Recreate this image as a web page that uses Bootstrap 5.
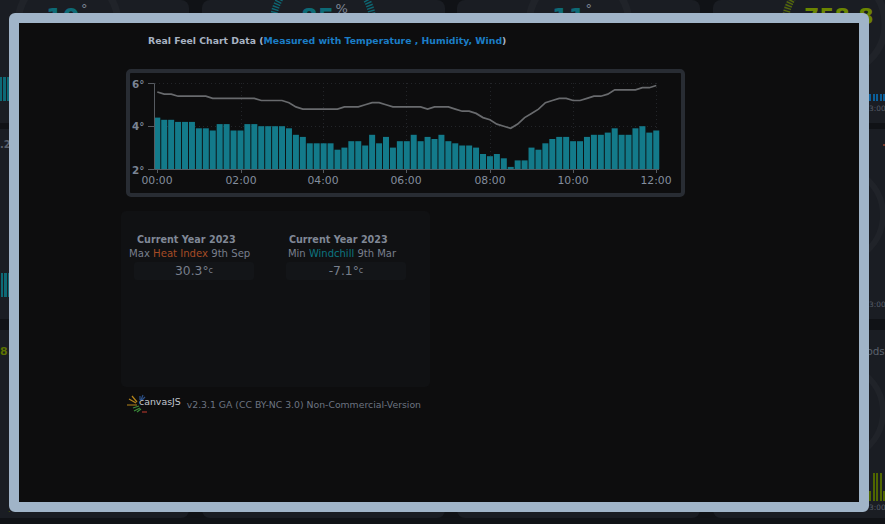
<!DOCTYPE html>
<html lang="en">
<head>
<meta charset="utf-8">
<title>Real Feel Chart Data</title>
<link href="https://cdn.jsdelivr.net/npm/bootstrap@5.3.0/dist/css/bootstrap.min.css" rel="stylesheet">
<style>
html,body{height:524px;overflow:hidden}
body{background:#101216;font-family:"DejaVu Sans",sans-serif;color:#8a94a5}
.dash{display:grid;grid-template-columns:repeat(4,243px);gap:0 12.7px;grid-template-rows:123px 190px 188px;row-gap:6px;margin-left:-54px;width:1010px}
.dash>.tile:nth-child(n+9){margin-top:5px}
.tile{background:#1a1d23;border-radius:8px;overflow:hidden;border:0;height:100%}
.gauge{display:block;flex:none}
.gauge text{font-family:"DejaVu Sans",sans-serif;font-weight:700;font-size:24px}
.gauge .t{fill:#0d6a76}.gauge .o{fill:#6b8500;font-size:22px}
.gauge .u{font-size:13px;font-weight:400;fill:#7d8694}
.micro{font-size:7.4px;color:#565c67;line-height:1}
.strip{display:flex;align-items:flex-end;gap:1.2px}
.strip i{display:block;width:2.3px;flex:none}
.st-t i{background:#0d6a76}.st-b i{background:#0b5f9a}.st-o i{background:#4f6600}
.tit{font-size:10px;font-weight:700;color:#5b616c;line-height:1}
.tit.ol{color:#5c7200;font-size:11px}
.micro.ol{color:#5c7200}
.ttl2{font-size:10.4px;color:#5b616c;line-height:1;white-space:nowrap;margin:16px 0 0 -9px}
.redmark{display:block;width:3px;height:2px;background:#7a3a2c;margin:15px 0 9px 14px}
.frame{position:fixed;left:9px;top:13px;width:860px;height:499px;border:10px solid #a0b4c8;border-radius:6px;background:#0d0d0e;overflow:hidden}
.head{font-size:9.32px;font-weight:600;color:#a8b3c3;margin:11px 0 0 129px;line-height:14px;height:14px}
.head span{color:#1b7dc6}
.plot{margin:21px 0 0 107px;width:559px;height:128px;border:4px solid #282c33;border-radius:5px;background:#0d0d0e}
.plot svg{display:block}
.plot text{font-family:"DejaVu Sans",sans-serif;fill:#848e9e;font-size:10.8px}
.plot .yl{font-size:10.4px;font-weight:700;fill:#7a8494}
.panel{margin:14px 0 0 102px;width:309px;height:176px;background:#101113;border-radius:5px;padding-top:22px}
.stat{color:#787f8c;font-size:10.1px;line-height:15px;width:154px}
.stat .cap{font-weight:600;font-size:9.65px;line-height:13px;color:#808896;padding-left:8px}
.stat .vbox{background:#131518;border-radius:3px;width:120px;height:18px;font-size:12.3px;line-height:18px;text-align:center;margin:1px 0 0 5px}
.stat .vbox sup{font-size:8px;top:-.3em}
.stat .sub2{padding-left:7px;font-size:10px}
.hi{color:#a54b25}.wc{color:#0d7580}
.stat1{margin-left:8px;width:157px}
.foot{margin:6px 0 0 108px;height:20px;font-size:9.3px;color:#6c7481}
.foot .cj{font-size:9.4px;color:#c2c8d0;margin:0 6px 0 -10px;position:relative;top:-1px}
.foot .ver{margin-top:3px}
.foot svg{margin-top:1px}
</style>
</head>
<body>
<div class="dash">
  <!-- row 1 -->
  <div class="tile card d-flex flex-column align-items-end">
    <svg class="gauge align-self-center" width="120" height="70" viewBox="-60 -24 120 70"><circle r="50" fill="none" stroke="#202329" stroke-width="7"/><text class="t" x="-22" y="2">10</text><text class="u" x="13" y="-11">°</text></svg>
    <div class="strip st-t me-auto" style="margin:7px 0 0 54px;height:24px"><i style="height:24px"></i><i style="height:24px"></i><i style="height:24px"></i></div>
  </div>
  <div class="tile card d-flex flex-column">
    <svg class="gauge align-self-center" width="120" height="70" viewBox="-60 -24 120 70"><circle r="50" fill="none" stroke="#0e6672" stroke-width="7" stroke-dasharray="1.4 1.4"/><text class="t" x="-22" y="2">85</text><text class="u" x="12.5" y="-11">%</text></svg>
  </div>
  <div class="tile card d-flex flex-column">
    <svg class="gauge align-self-center" width="120" height="70" viewBox="-60 -24 120 70"><circle r="50" fill="none" stroke="#202329" stroke-width="7"/><text class="t" x="-27" y="2">11</text><text class="u" x="6.5" y="-11">°</text></svg>
  </div>
  <div class="tile card d-flex flex-column" style="padding-left:156px">
    <svg class="gauge" style="margin-left:-156px;align-self:center" width="120" height="70" viewBox="-60 -24 120 70"><circle r="50" fill="none" stroke="#202329" stroke-width="7"/><path d="M-49 10A50 50 0 0 1 -38 -32" fill="none" stroke="#55690a" stroke-width="7" stroke-dasharray="1.4 1.4"/><text class="o" x="-31" y="0">758.8</text></svg>
    <div class="strip st-b" style="height:24px;margin-top:7px"><i style="height:7px"></i><i style="height:7px"></i><i style="height:7px"></i><i style="height:7px"></i><i style="height:7px"></i></div>
    <div class="micro" style="margin-top:4px">3:00</div>
  </div>
  <!-- row 2 -->
  <div class="tile card d-flex flex-column">
    <div class="tit" style="margin:11px 0 0 54px">.2</div>
    <div class="strip st-t" style="margin:123px 0 0 55px;height:24px"><i style="height:24px"></i><i style="height:24px"></i><i style="height:24px"></i></div>
  </div>
  <div class="tile card"></div>
  <div class="tile card"></div>
  <div class="tile card d-flex flex-column" style="padding-left:156px">
    <i class="redmark"></i>
    <svg class="gauge" style="margin-left:-156px;align-self:center" width="120" height="120" viewBox="-60 -60 120 120"><circle r="48" fill="none" stroke="#202329" stroke-width="6"/></svg>
    <div class="micro" style="margin-top:26px">3:00</div>
  </div>
  <!-- row 3 -->
  <div class="tile card d-flex flex-column">
    <div class="tit ol" style="margin:16px 0 0 54px">8.</div>
    <div class="micro ol" style="margin:149px 0 0 62px">.</div>
  </div>
  <div class="tile card"></div>
  <div class="tile card"></div>
  <div class="tile card d-flex flex-column" style="padding-left:156px">
    <div class="ttl2">oods</div>
    <svg class="gauge" style="margin:-2px 0 0 -156px;align-self:center" width="120" height="116" viewBox="-60 -58 120 116"><circle r="48" fill="none" stroke="#202329" stroke-width="6"/></svg>
    <div class="strip st-o" style="height:30px;margin-top:1px"><i style="height:10px"></i><i style="height:28px"></i><i style="height:28px"></i><i style="height:28px"></i><i style="height:10px"></i></div>
    <div class="micro" style="margin-top:3px">3:00</div>
  </div>
</div>

<div class="frame d-flex flex-column">
  <div class="head">Real Feel Chart Data (<span>Measured with Temperature , Humidity, Wind</span>)</div>
  <div class="plot">
    <svg id="chart" width="551" height="120" viewBox="130 73 551 120">
      <g stroke="#232529" stroke-width="1" stroke-dasharray="1 3" fill="none">
        <path d="M155 83.5H659M155 126.5H659"/>
        <path d="M241.5 83V169M323.5 83V169M406.5 83V169M490.5 83V169M573.5 83V169M656.5 83V169"/>
      </g>
      <g id="bars" fill="#137a8a"></g>
      <polyline id="feel" fill="none" stroke="#686a6d" stroke-width="1.7"/>
      <path d="M148 83.5H154.5V169.5H659M148 126.5H154.5M148 169.5H154.5M157.5 169V173M241.5 169V173M323.5 169V173M406.5 169V173M490.5 169V173M573.5 169V173M656.5 169V173" fill="none" stroke="#565a60" stroke-width="1"/>
      <text class="yl" x="132" y="88">6°</text>
      <text class="yl" x="132" y="130">4°</text>
      <text class="yl" x="132" y="174">2°</text>
      <text x="157" y="184" text-anchor="middle">00:00</text>
      <text x="241" y="184" text-anchor="middle">02:00</text>
      <text x="323" y="184" text-anchor="middle">04:00</text>
      <text x="406" y="184" text-anchor="middle">06:00</text>
      <text x="490" y="184" text-anchor="middle">08:00</text>
      <text x="573" y="184" text-anchor="middle">10:00</text>
      <text x="656" y="184" text-anchor="middle">12:00</text>
    </svg>
  </div>
  <div class="panel d-flex align-items-start">
    <div class="stat stat1">
      <div class="cap">Current Year 2023</div>
      <div class="sub">Max <span class="hi">Heat Index</span> 9th Sep</div>
      <div class="vbox">30.3°<sup>c</sup></div>
    </div>
    <div class="stat">
      <div class="cap">Current Year 2023</div>
      <div class="sub2">Min <span class="wc">Windchill</span> 9th Mar</div>
      <div class="vbox">-7.1°<sup>c</sup></div>
    </div>
  </div>
  <div class="foot d-flex align-items-center">
    <svg width="22" height="20" viewBox="0 0 22 20" fill="none" stroke-width="1.2">
      <path d="M0 11H10M2 5L9 9M5 2L10 8" stroke="#b5851b"/>
      <path d="M13 2V6M16 1L14 6M18 3L15 6" stroke="#2b4f86"/>
      <path d="M6 14L12 12M7 17L13 14M10 18L14 15" stroke="#3b8a3a"/>
      <path d="M15 18H20" stroke="#a5322a"/>
    </svg>
    <span class="cj">canvasJS</span>
    <span class="ver">v2.3.1 GA (CC BY-NC 3.0) Non-Commercial-Version</span>
  </div>
</div>

<script>
var bars=[4.4,4.3,4.3,4.2,4.2,4.2,3.9,3.9,3.8,4.1,4.1,3.8,3.8,4.1,4.1,4.0,4.0,4.0,4.0,3.9,3.6,3.5,3.2,3.2,3.2,3.2,2.9,3.0,3.3,3.3,3.1,3.6,3.2,3.5,3.0,3.3,3.3,3.6,3.3,3.5,3.4,3.6,3.3,3.2,3.1,3.1,3.0,2.7,2.6,2.7,2.5,2.1,2.4,2.4,3.0,2.9,3.2,3.4,3.5,3.5,3.3,3.3,3.5,3.6,3.6,3.7,3.9,3.6,3.6,3.9,4.0,3.7,3.8];
var feel=[5.6,5.5,5.5,5.4,5.4,5.4,5.4,5.4,5.3,5.3,5.3,5.3,5.3,5.3,5.3,5.2,5.2,5.2,5.2,5.1,4.9,4.8,4.8,4.8,4.8,4.8,4.8,4.9,4.9,4.9,5.0,5.1,5.1,5.0,4.9,4.9,4.9,4.9,4.9,4.8,4.9,4.9,4.9,4.8,4.7,4.7,4.6,4.4,4.3,4.1,4.0,3.9,4.1,4.4,4.6,4.8,5.1,5.2,5.3,5.3,5.2,5.2,5.3,5.4,5.4,5.5,5.7,5.7,5.7,5.7,5.8,5.8,5.9];
var NS="http://www.w3.org/2000/svg",g=document.getElementById("bars"),pts=[];
function X(i){return 157.3+i*6.93}
function Y(v){return 169-(v-2)*21.4}
bars.forEach(function(v,i){
  var r=document.createElementNS(NS,"rect");
  r.setAttribute("x",(X(i)-3).toFixed(2));
  r.setAttribute("width","6");
  r.setAttribute("y",Y(v).toFixed(1));
  r.setAttribute("height",(169-Y(v)).toFixed(1));
  g.appendChild(r);
});
feel.forEach(function(v,i){pts.push(X(i).toFixed(1)+","+Y(v).toFixed(1))});
document.getElementById("feel").setAttribute("points",pts.join(" "));
</script>
<script src="https://cdn.jsdelivr.net/npm/bootstrap@5.3.0/dist/js/bootstrap.bundle.min.js"></script>
</body>
</html>
